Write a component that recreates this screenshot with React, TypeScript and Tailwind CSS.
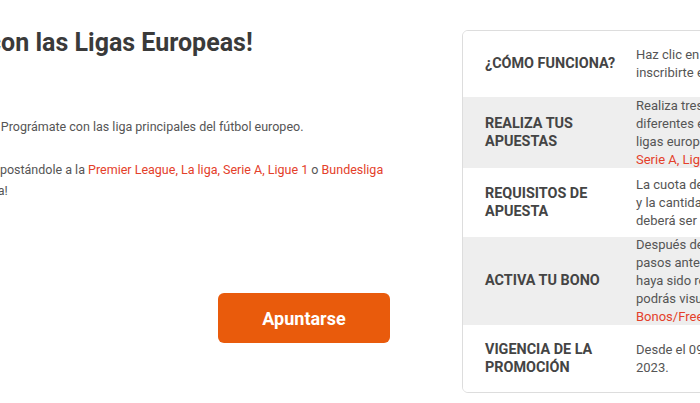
import React from "react";

const red = "text-[#e4402a]";

function Row({
  label,
  h,
  gray,
  children,
}: {
  label: React.ReactNode;
  h: string;
  gray?: boolean;
  children: React.ReactNode;
}) {
  return (
    <div className={`flex items-center ${h} ${gray ? "bg-[#eeeeee]" : "bg-white"}`}>
      <div className="w-[173px] shrink-0 pl-[22px] pr-[10px] text-[14.4px] font-bold leading-[18px] text-[#444444] uppercase">
        {label}
      </div>
      <div className="flex-1 text-[13px] leading-[18px] text-[#555555] whitespace-nowrap">{children}</div>
    </div>
  );
}

export default function App() {
  return (
    <div className="w-[700px] h-[403px] overflow-hidden bg-white flex font-['Roboto',sans-serif]">
      <div className="w-[462px] shrink-0 flex flex-col whitespace-nowrap">
        <h1 className="mt-[28px] ml-[-83px] text-[25px] leading-[30px] font-bold text-[#3a3a3a]">
          ¡Gana con las Ligas Europeas!
        </h1>
        <p className="mt-[58px] ml-[-80px] text-[12.5px] leading-[21px] text-[#555555]">
          ¡Llegó la hora! Prográmate con las liga principales del fútbol europeo.
        </p>
        <p className="mt-[22px] text-[12.5px] leading-[21px] text-[#555555]">
          <span className="block ml-[-77px]">
            Gana dinero apostándole a la{" "}
            <span className={red}>Premier League, La liga, Serie A, Ligue 1</span> o{" "}
            <span className={red}>Bundesliga</span>
          </span>
          <span className="block ml-[-64px]">¡Participa ya!</span>
        </p>
        <button className="mt-[92px] ml-[218px] w-[172px] h-[50px] rounded-[6px] bg-[#e95b0c] text-white text-[18px] font-bold">
          Apuntarse
        </button>
      </div>
      <div className="mt-[30px] w-[420px] h-[363px] shrink-0 border border-[#dddddd] rounded-[6px] overflow-hidden">
        <Row label="¿Cómo funciona?" h="h-[66px]">
          Haz clic en el botón “Apuntarse” para
          <br />
          inscribirte en la promoción.
        </Row>
        <Row label={<>Realiza tus<br />apuestas</>} h="h-[71px]" gray>
          Realiza tres apuestas de 20€ en
          <br />
          diferentes eventos de las principales
          <br />
          ligas europeas: <span className={red}>Premier League, La liga,</span>
          <br />
          <span className={red}>Serie A, Ligue 1 o Bundesliga.</span>
        </Row>
        <Row label={<>Requisitos de<br />apuesta</>} h="h-[69px]">
          La cuota de las apuestas deberá ser 1.50
          <br />
          y la cantidad mínima de cada apuesta
          <br />
          deberá ser de 20€.
        </Row>
        <Row label="Activa tu bono" h="h-[88px]" gray>
          Después de haber completado los
          <br />
          pasos anteriores y una vez que el bono
          <br />
          haya sido reclamado y acreditado,
          <br />
          podrás visualizarlo en la sección
          <br />
          <span className={red}>Bonos/Freebets.</span>
        </Row>
        <Row label={<>Vigencia de la<br />promoción</>} h="h-[67px]">
          Desde el 09 de enero hasta el 31 de mayo de
          <br />
          2023.
        </Row>
      </div>
    </div>
  );
}
